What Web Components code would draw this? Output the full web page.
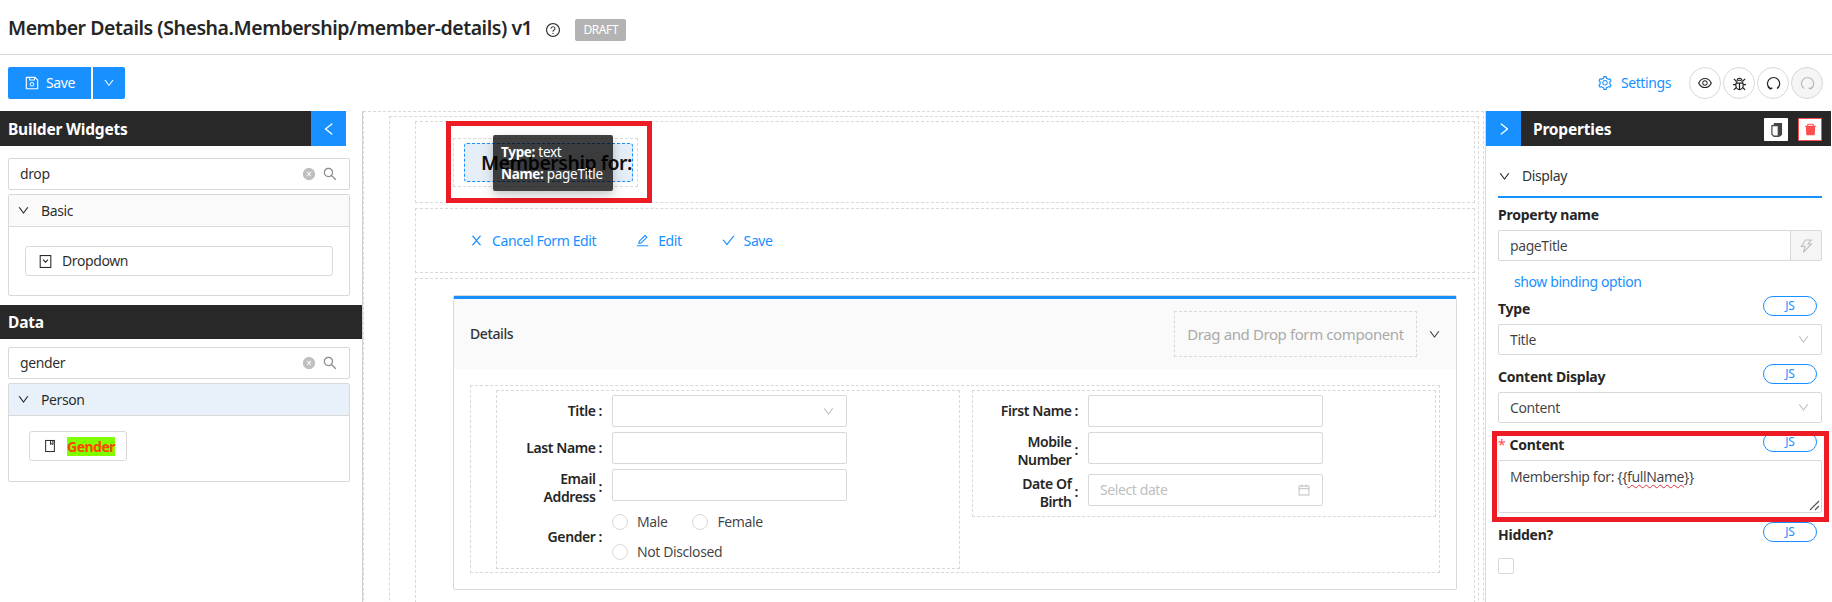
<!DOCTYPE html>
<html>
<head>
<meta charset="utf-8">
<title>Member Details</title>
<style>
  html, body { margin: 0; height: 100%; overflow: hidden; background: #fff; }
  body { font: 14px/22px "Noto Sans", "Open Sans", sans-serif; letter-spacing: -0.4px; color: rgba(0,0,0,.85); }
  form-designer { display: block; }
</style>
</head>
<body>

<form-designer>
  <page-header slot="top"></page-header>
  <tool-bar slot="top"></tool-bar>

  <left-sidebar slot="left">
    <panel-bar tone="left">Builder Widgets</panel-bar>
    <div class="pad12"></div>
    <search-box value="drop"></search-box>
    <collapse-panel title="Basic" pad="19px 16px 19px 16px">
      <drag-item icon="dropdown" wide>Dropdown</drag-item>
    </collapse-panel>
    <panel-bar tone="data">Data</panel-bar>
    <search-box value="gender"></search-box>
    <collapse-panel title="Person" active pad="15px 20px 20px 20px">
      <drag-item icon="book" mark>Gender</drag-item>
    </collapse-panel>
  </left-sidebar>

  <design-canvas slot="center">
    <title-row></title-row>
    <action-row>
      <link-action icon="close">Cancel Form Edit</link-action>
      <link-action icon="edit">Edit</link-action>
      <link-action icon="check">Save</link-action>
    </action-row>
    <section-row>
      <details-card>
        <form-column>
          <form-row><span slot="label">Title</span><text-box icon="down"></text-box></form-row>
          <form-row><span slot="label">Last Name</span><text-box></text-box></form-row>
          <form-row tall><span slot="label">Email<br>Address</span><text-box></text-box></form-row>
          <form-row radio>
            <span slot="label">Gender</span>
            <radio-group>
              <radio-option>Male</radio-option>
              <radio-option>Female</radio-option>
              <radio-option>Not Disclosed</radio-option>
            </radio-group>
          </form-row>
        </form-column>
        <form-column short>
          <form-row><span slot="label">First Name</span><text-box></text-box></form-row>
          <form-row tall><span slot="label">Mobile<br>Number</span><text-box></text-box></form-row>
          <form-row tall><span slot="label">Date Of<br>Birth</span><text-box icon="calendar" placeholder="Select date"></text-box></form-row>
        </form-column>
      </details-card>
    </section-row>
  </design-canvas>

  <right-sidebar slot="right">
    <prop-field label="Property name">
      <text-box value="pageTitle" height="31" bolt></text-box>
    </prop-field>
    <binding-link>show binding option</binding-link>
    <prop-field label="Type" js><text-box value="Title" icon="down" height="31"></text-box></prop-field>
    <prop-field label="Content Display" js><text-box value="Content" icon="down" height="31"></text-box></prop-field>
    <prop-field label="Content" js required marked><content-area></content-area></prop-field>
    <prop-field label="Hidden?" js><check-box></check-box></prop-field>
  </right-sidebar>
</form-designer>

<script>
const BLUE = '#1890ff';
const DASH = '1px dashed #d9d9d9';

const ICONS = {
  down: 'M884 256h-75c-5.1 0-9.9 2.5-12.9 6.6L512 654.2 227.9 262.6c-3-4.1-7.8-6.6-12.9-6.6h-75c-6.5 0-10.3 7.4-6.5 12.7l352.6 486.1c12.8 17.6 39 17.6 51.7 0l352.6-486.1c3.9-5.3.1-12.7-6.4-12.7z',
  left: 'M724 218.3V141c0-6.7-7.7-10.4-12.9-6.3L260.3 486.8a31.86 31.86 0 000 50.3l450.8 352.1c5.3 4.1 12.9.4 12.9-6.3v-77.3c0-4.9-2.3-9.6-6.1-12.6l-360-281 360-281.1c3.8-3 6.1-7.7 6.1-12.6z',
  right: 'M765.7 486.8L314.9 134.7A7.97 7.97 0 00302 141v77.3c0 4.9 2.3 9.6 6.1 12.6l360 281.1-360 281.1c-3.9 3-6.1 7.7-6.1 12.6V883c0 6.7 7.7 10.4 12.9 6.3l450.8-352.1a31.96 31.96 0 000-50.4z',
  search: 'M909.6 854.5L649.9 594.8C690.2 542.7 712 479 712 412c0-80.2-31.3-155.4-87.9-212.1-56.6-56.7-132-87.9-212.1-87.9s-155.5 31.3-212.1 87.9C143.2 256.5 112 331.8 112 412c0 80.1 31.3 155.5 87.9 212.1C256.5 680.8 331.8 712 412 712c67 0 130.6-21.8 182.7-62l259.7 259.6a8.2 8.2 0 0011.6 0l43.6-43.5a8.2 8.2 0 000-11.6zM570.4 570.4C528 612.7 471.8 636 412 636s-116-23.3-158.4-65.6C211.3 528 188 471.8 188 412s23.3-116.1 65.6-158.4C296 211.3 352.2 188 412 188s116.1 23.2 158.4 65.6S636 352.2 636 412s-23.3 116.1-65.6 158.4z',
  close: 'M563.8 512l262.5-312.9c4.4-5.2.7-13.1-6.1-13.1h-79.8c-4.7 0-9.2 2.1-12.3 5.7L511.6 449.8 295.1 191.7c-3-3.6-7.5-5.7-12.3-5.7H203c-6.8 0-10.5 7.9-6.1 13.1L459.4 512 196.9 824.9A7.95 7.95 0 00203 838h79.8c4.7 0 9.2-2.1 12.3-5.7l216.5-258.1 216.5 258.1c3 3.6 7.5 5.7 12.3 5.7h79.8c6.8 0 10.5-7.9 6.1-13.1L563.8 512z',
  check: 'M912 190h-69.9c-9.8 0-19.1 4.5-25.1 12.2L404.7 724.5 207 474a32 32 0 00-25.1-12.2H112c-6.7 0-10.4 7.7-6.3 12.9l273.9 347c12.8 16.2 37.4 16.2 50.3 0l488.4-618.9c4.1-5.1.4-12.8-6.3-12.8z',
  edit: 'M257.7 752c2 0 4-.2 6-.5L431.9 722c2-.4 3.9-1.3 5.3-2.8l423.9-423.9a9.96 9.96 0 000-14.1L694.9 114.9c-1.9-1.9-4.4-2.9-7.1-2.9s-5.2 1-7.1 2.9L256.8 538.8c-1.5 1.5-2.4 3.3-2.8 5.3l-29.5 168.2a33.5 33.5 0 009.4 29.8c6.6 6.4 14.9 9.9 23.8 9.9zm67.4-174.4L687.8 215l73.3 73.3-362.7 362.6-88.9 15.7 15.6-89zM880 836H144c-17.7 0-32 14.3-32 32v36c0 4.4 3.6 8 8 8h784c4.4 0 8-3.6 8-8v-36c0-17.7-14.3-32-32-32z',
  eye: 'M942.2 486.2C847.4 286.5 704.1 186 512 186c-192.2 0-335.4 100.5-430.2 300.3a60.3 60.3 0 000 51.5C176.6 737.5 319.9 838 512 838c192.2 0 335.4-100.5 430.2-300.3 7.7-16.2 7.7-35 0-51.5zM512 766c-161.3 0-279.4-81.8-362.7-254C232.6 339.8 350.7 258 512 258c161.3 0 279.4 81.8 362.7 254C791.5 684.2 673.4 766 512 766zm-4-430c-97.2 0-176 78.8-176 176s78.8 176 176 176 176-78.8 176-176-78.8-176-176-176zm0 288c-61.9 0-112-50.1-112-112s50.1-112 112-112 112 50.1 112 112-50.1 112-112 112z',
  setting: 'M924.8 625.7l-65.5-56c3.1-19 4.7-38.4 4.7-57.8s-1.6-38.8-4.7-57.8l65.5-56a32.03 32.03 0 009.3-35.2l-.9-2.6a443.74 443.74 0 00-79.7-137.9l-1.8-2.1a32.12 32.12 0 00-35.1-9.5l-81.3 28.9c-30-24.6-63.5-44-99.7-57.6l-15.7-85a32.05 32.05 0 00-25.8-25.7l-2.7-.5c-52.1-9.4-106.9-9.4-159 0l-2.7.5a32.05 32.05 0 00-25.8 25.7l-15.8 85.4a351.86 351.86 0 00-99 57.4l-81.9-29.1a32 32 0 00-35.1 9.5l-1.8 2.1a446.02 446.02 0 00-79.7 137.9l-.9 2.6c-4.5 12.5-.8 26.5 9.3 35.2l66.3 56.6c-3.1 18.8-4.6 38-4.6 57.1 0 19.2 1.5 38.4 4.6 57.1L99 625.5a32.03 32.03 0 00-9.3 35.2l.9 2.6c18.1 50.4 44.9 96.9 79.7 137.9l1.8 2.1a32.12 32.12 0 0035.1 9.5l81.9-29.1c29.8 24.5 63.1 43.9 99 57.4l15.8 85.4a32.05 32.05 0 0025.8 25.7l2.7.5a449.4 449.4 0 00159 0l2.7-.5a32.05 32.05 0 0025.8-25.7l15.7-85a350 350 0 0099.7-57.6l81.3 28.9a32 32 0 0035.1-9.5l1.8-2.1c34.8-41.1 61.6-87.5 79.7-137.9l.9-2.6c4.5-12.3.8-26.3-9.3-35zM788.3 465.9c2.5 15.1 3.8 30.6 3.8 46.1s-1.3 31-3.8 46.1l-6.6 40.1 74.7 63.9a370.03 370.03 0 01-42.6 73.6L721 702.8l-31.4 25.8c-23.9 19.6-50.5 35-79.3 45.8l-38.1 14.3-17.9 97a377.5 377.5 0 01-85 0l-17.9-97.2-37.8-14.5c-28.5-10.8-55-26.2-78.7-45.7l-31.4-25.9-93.4 33.2c-17-22.9-31.2-47.6-42.6-73.6l75.5-64.5-6.5-40c-2.4-14.9-3.7-30.3-3.7-45.5 0-15.3 1.2-30.6 3.7-45.5l6.5-40-75.5-64.5c11.3-26.1 25.6-50.7 42.6-73.6l93.4 33.2 31.4-25.9c23.7-19.5 50.2-34.9 78.7-45.7l37.9-14.3 17.9-97.2c28.1-3.2 56.8-3.2 85 0l17.9 97 38.1 14.3c28.7 10.8 55.4 26.2 79.3 45.8l31.4 25.8 92.8-32.9c17 22.9 31.2 47.6 42.6 73.6L781.8 426l6.5 39.9zM512 326c-97.2 0-176 78.8-176 176s78.8 176 176 176 176-78.8 176-176-78.8-176-176-176zm79.2 255.2A111.6 111.6 0 01512 614c-29.9 0-58-11.7-79.2-32.8A111.6 111.6 0 01400 502c0-29.9 11.7-58 32.8-79.2C454 401.6 482.1 390 512 390c29.9 0 58 11.6 79.2 32.8A111.6 111.6 0 01624 502c0 29.9-11.7 58-32.8 79.2z',
  save: 'M893.3 293.3L730.7 130.7c-7.5-7.5-16.7-13-26.7-16V112H144c-17.7 0-32 14.3-32 32v736c0 17.7 14.3 32 32 32h736c17.7 0 32-14.3 32-32V338.5c0-17-6.7-33.2-18.7-45.2zM384 184h256v104H384V184zm456 656H184V184h136v136c0 17.7 14.3 32 32 32h320c17.7 0 32-14.3 32-32V205.8l136 136V840zM512 442c-79.5 0-144 64.5-144 144s64.5 144 144 144 144-64.5 144-144-64.5-144-144-144zm0 224c-44.2 0-80-35.8-80-80s35.8-80 80-80 80 35.8 80 80-35.8 80-80 80z',
  help: 'M512 64C264.6 64 64 264.6 64 512s200.6 448 448 448 448-200.6 448-448S759.4 64 512 64zm0 820c-205.4 0-372-166.6-372-372s166.6-372 372-372 372 166.6 372 372-166.6 372-372 372zM623.6 316.7C593.6 290.4 554 276 512 276s-81.6 14.5-111.6 40.7C369.2 344 352 380.7 352 420v7.6c0 4.4 3.6 8 8 8h48c4.4 0 8-3.6 8-8V420c0-44.1 43.1-80 96-80s96 35.9 96 80c0 31.1-22 59.6-56.1 72.7-21.2 8.1-39.2 22.3-52.1 40.9-13.1 19-19.9 41.8-19.9 64.9V620c0 4.4 3.6 8 8 8h48c4.4 0 8-3.6 8-8v-22.7a48.3 48.3 0 0130.9-44.8c59-22.7 97.1-74.7 97.1-132.5.1-39.3-17.1-76-48.3-103.3zM472 732a40 40 0 1080 0 40 40 0 10-80 0z',
  calendar: 'M880 184H712v-64c0-4.4-3.6-8-8-8h-56c-4.4 0-8 3.6-8 8v64H384v-64c0-4.4-3.6-8-8-8h-56c-4.4 0-8 3.6-8 8v64H144c-17.7 0-32 14.3-32 32v664c0 17.7 14.3 32 32 32h736c17.7 0 32-14.3 32-32V216c0-17.7-14.3-32-32-32zm-40 656H184V460h656v380zM184 392V256h128v48c0 4.4 3.6 8 8 8h56c4.4 0 8-3.6 8-8v-48h256v48c0 4.4 3.6 8 8 8h56c4.4 0 8-3.6 8-8v-48h128v136H184z',
  trash: 'M864 256H736v-80c0-35.3-28.7-64-64-64H352c-35.3 0-64 28.7-64 64v80H160c-17.7 0-32 14.3-32 32v32c0 4.4 3.6 8 8 8h60.4l24.7 523c1.6 34.1 29.8 61 63.9 61h454c34.2 0 62.3-26.8 63.9-61l24.7-523H888c4.4 0 8-3.6 8-8v-32c0-17.7-14.3-32-32-32zm-200 0H360v-72h304v72z',
  clear: 'M512 64C264.6 64 64 264.6 64 512s200.6 448 448 448 448-200.6 448-448S759.4 64 512 64zm165.4 618.2l-66-.3L512 563.4l-99.3 118.4-66.1.3c-4.4 0-8-3.5-8-8 0-1.9.7-3.7 1.9-5.2l130.1-155L340.5 359a8.32 8.32 0 01-1.9-5.2c0-4.4 3.6-8 8-8l66.1.3L512 464.6l99.3-118.4 66-.3c4.4 0 8 3.5 8 8 0 1.9-.7 3.8-1.9 5.2L553.5 514l130 155c1.2 1.5 1.9 3.3 1.9 5.2 0 4.4-3.6 8-8 8z'
};

// icons without a stock outline, drawn with strokes on a 24 box
const DRAWN = {
  bug: '<ellipse cx="12" cy="14" rx="5.2" ry="6.6"/><path d="M7 11.5h10M12 11.5V20.5M8.5 7.5a3.6 3.6 0 017 0M4 5.5l3.6 3.4M20 5.5l-3.6 3.4M2.8 13.5h4M21.2 13.5h-4M4 21l3.6-3.4M20 21l-3.6-3.4"/>',
  undo: '<path d="M7.2 19.2A8.6 8.6 0 1117 19.2"/><path d="M4.6 16.6l2.8 3 3-1.4" stroke-width="2.2"/>',
  redo: '<path d="M7.2 19.2A8.6 8.6 0 1117 19.2"/><path d="M19.4 16.6l-2.8 3-3-1.4" stroke-width="2.2"/>',
  dropdown: '<rect x="3.5" y="2.5" width="17" height="19"/><path d="M8 9l4 4 4-4"/>',
  book: '<rect x="4.5" y="2.5" width="15" height="19"/><path d="M13 2.5v7l2-1.6 2 1.6v-7"/>',
  copy: '<path d="M9 6.5V3.5h10v15.5l-3 2.5H9z" fill="#444"/><path d="M5.5 6.5h9v14.8H8l-2.5-2.6z" fill="#fff"/>',
  bolt: '<path d="M11 3h9l-5 6h5L8 21.5l2.6-9H5z"/>'
};

class UiIcon extends HTMLElement {
  connectedCallback() {
    const name = this.getAttribute('name');
    const size = this.getAttribute('size') || 14;
    const body = DRAWN[name]
      ? `<svg viewBox="0 0 24 24" fill="none" stroke="currentColor" stroke-width="1.7">${DRAWN[name]}</svg>`
      : `<svg viewBox="0 0 1024 1024" fill="currentColor"><path d="${ICONS[name]}"/></svg>`;
    this.attachShadow({ mode: 'open' }).innerHTML = `
      <style>
        :host { display: inline-flex; flex: none; width: ${size}px; height: ${size}px; }
        svg { width: 100%; height: 100%; display: block; }
      </style>${body}`;
  }
}

// Most elements only need a shadow root filled once
function element(tag, render) {
  customElements.define(tag, class extends HTMLElement {
    connectedCallback() {
      if (!this.shadowRoot) this.attachShadow({ mode: 'open' }).innerHTML = render(this);
    }
  });
}

element('form-designer', () => `
  <style>
    :host { display: block; height: 602px; overflow: hidden; }
    .body { display: flex; height: 491px; overflow: hidden; }
  </style>
  <slot name="top"></slot>
  <div class="body">
    <slot name="left"></slot>
    <slot name="center"></slot>
    <slot name="right"></slot>
  </div>`);

element('page-header', () => `
  <style>
    :host { display: flex; align-items: center; height: 54px; box-sizing: content-box; border-bottom: 1px solid #d9d9d9; padding-left: 8px; }
    h1 { margin: 2px 0 0; font-size: 19.5px; line-height: 26px; font-weight: 600; letter-spacing: -.45px; color: #262626; }
    ui-icon { margin: 6px 0 0 13px; color: #333; }
    .tag { margin: 6px 0 0 14px; width: 51px; height: 22px; background: #b3b3b3; color: #fff; font-size: 12px; line-height: 22px; text-align: center; border-radius: 2px; }
  </style>
  <h1>Member Details (Shesha.Membership/member-details) v1</h1>
  <ui-icon name="help" size="16"></ui-icon>
  <span class="tag">DRAFT</span>`);

element('tool-bar', () => `
  <style>
    :host { display: flex; align-items: flex-start; height: 56px; padding: 12px 9px 0 8px; box-sizing: border-box; }
    .btn { display: flex; align-items: center; height: 32px; background: ${BLUE}; color: #fff; border-radius: 2px 0 0 2px; box-sizing: border-box; }
    .save { width: 83px; padding-left: 16px; gap: 6px; }
    .more { width: 32px; margin-left: 2px; justify-content: center; border-radius: 0 2px 2px 0; }
    .settings { margin-left: auto; display: flex; align-items: center; gap: 8px; height: 32px; color: ${BLUE}; margin-right: 18px; }
    .round { display: flex; gap: 2px; }
    .round span { width: 32px; height: 32px; box-sizing: border-box; border: 1px solid #d9d9d9; border-radius: 50%; display: flex; align-items: center; justify-content: center; color: #222; }
    .round span.off { background: #f5f5f5; color: #bbb; }
  </style>
  <div class="btn save"><ui-icon name="save" size="16"></ui-icon>Save</div>
  <div class="btn more"><ui-icon name="down" size="12"></ui-icon></div>
  <div class="settings"><ui-icon name="setting" size="16"></ui-icon>Settings</div>
  <div class="round">
    <span><ui-icon name="eye" size="16"></ui-icon></span>
    <span><ui-icon name="bug" size="17"></ui-icon></span>
    <span><ui-icon name="undo" size="17"></ui-icon></span>
    <span class="off"><ui-icon name="redo" size="17"></ui-icon></span>
  </div>`);

element('left-sidebar', () => `
  <style>
    :host { display: flex; flex-direction: column; width: 362px; flex: none; }
    ::slotted(.pad12) { height: 12px; flex: none; }
  </style>
  <slot></slot>`);

element('panel-bar', el => {
  const isLeft = el.getAttribute('tone') === 'left';
  return `
  <style>
    :host { display: flex; align-items: center; flex: none; background: #282828; color: #fff; font-weight: 700; font-size: 15.5px; letter-spacing: -.2px; box-sizing: border-box; padding-left: 8px;
      height: ${isLeft ? 35 : 34}px; width: ${isLeft ? 346 : 362}px; margin-top: ${isLeft ? 0 : 9}px; margin-bottom: ${isLeft ? 0 : 8}px; }
    .toggle { margin-left: auto; width: 35px; height: 100%; background: ${BLUE}; display: flex; align-items: center; justify-content: center; }
  </style>
  <slot></slot>
  ${isLeft ? '<span class="toggle"><ui-icon name="left" size="16"></ui-icon></span>' : ''}`;
});

element('search-box', el => `
  <style>
    :host { display: flex; align-items: center; flex: none; box-sizing: border-box; width: 342px; height: 32px; margin-left: 8px; padding: 0 11px; border: 1px solid #d9d9d9; border-radius: 2px; }
    span { flex: 1; }
    .x { color: #bfbfbf; margin-right: 6px; }
    .s { color: #8c8c8c; }
  </style>
  <span>${el.getAttribute('value')}</span>
  <ui-icon class="x" name="clear" size="14"></ui-icon>
  <ui-icon class="s" name="search" size="16"></ui-icon>`);

element('collapse-panel', el => `
  <style>
    :host { display: block; flex: none; box-sizing: border-box; width: 342px; margin: 4px 0 0 8px; border: 1px solid #d9d9d9; border-radius: 2px; }
    .head { display: flex; align-items: center; height: 31px; padding-left: 8px; gap: 11px; border-bottom: 1px solid #d9d9d9; background: ${el.hasAttribute('active') ? '#e8f1f9' : '#fafafa'}; }
    .content { padding: ${el.getAttribute('pad')}; }
  </style>
  <div class="head"><ui-icon name="down" size="13"></ui-icon>${el.getAttribute('title')}</div>
  <div class="content"><slot></slot></div>`);

element('drag-item', el => `
  <style>
    :host { display: ${el.hasAttribute('wide') ? 'flex' : 'inline-flex'}; vertical-align: top; align-items: center; box-sizing: border-box; height: 30px; padding-left: ${el.hasAttribute('wide') ? 12 : 13}px; border: 1px solid #d9d9d9; border-radius: 3px; gap: ${el.hasAttribute('wide') ? 9 : 10}px; ${el.hasAttribute('mark') ? 'width: 98px;' : ''} }
    .mark { background: #7fff00; color: #ff4500; font-weight: 700; line-height: 19px; letter-spacing: -.5px; }
  </style>
  <ui-icon name="${el.getAttribute('icon')}" size="${el.hasAttribute('wide') ? 15 : 14}"></ui-icon>
  ${el.hasAttribute('mark') ? '<span class="mark"><slot></slot></span>' : '<slot></slot>'}`);

// nested dashed frames of the canvas
element('design-canvas', () => `
  <style>
    :host { display: block; flex: none; width: 1124px; overflow: hidden; border-left: 1px solid #d0d0d0; box-sizing: border-box; padding-right: 2px; }
    .outer { border: ${DASH}; border-bottom: 0; padding: 4px 4px 0 25px; height: 600px; box-sizing: border-box; }
    .inner { border: ${DASH}; border-bottom: 0; padding: 4px 3px 0 25px; height: 600px; box-sizing: border-box; }
  </style>
  <div class="outer"><div class="inner"><slot></slot></div></div>`);

element('title-row', () => `
  <style>
    :host { display: flex; box-sizing: border-box; height: 82px; border: ${DASH}; padding-left: 30px; }
    .red { position: relative; box-sizing: border-box; width: 206px; height: 82px; margin-top: -1px; border: 5px solid #ed1c24; padding: 12px 9px 0 2px; }
    .frame { box-sizing: border-box; height: 49px; border: ${DASH}; padding: 4px 4px 4px 10px; }
    .title { box-sizing: border-box; height: 39px; border: 1px dashed ${BLUE}; border-radius: 3px; background: #e6eff8; padding-left: 16px; font-size: 19.5px; font-weight: 600; line-height: 37px; letter-spacing: -.5px; color: #111; white-space: nowrap; overflow: hidden; }
    .tip { position: absolute; left: 42px; top: 9px; width: 120px; height: 56px; box-sizing: border-box; padding: 6px 8px; background: rgba(0,0,0,.75); color: #fff; border-radius: 2px; box-shadow: 0 6px 16px rgba(0,0,0,.14), 0 3px 6px rgba(0,0,0,.1); line-height: 22px; font-size: 13.5px; letter-spacing: -.3px; }
    .tip b { font-weight: 700; }
  </style>
  <div class="red">
    <div class="frame"><div class="title">Membership for:</div></div>
    <div class="tip"><div><b>Type:</b> text</div><div><b>Name:</b> pageTitle</div></div>
  </div>`);

element('action-row', () => `
  <style>
    :host { display: flex; align-items: center; gap: 39px; box-sizing: border-box; height: 65px; margin-top: 5px; border: ${DASH}; padding-left: 53px; }
  </style>
  <slot></slot>`);

element('link-action', el => `
  <style>
    :host { display: inline-flex; align-items: center; gap: 8px; color: ${BLUE}; }
  </style>
  <ui-icon name="${el.getAttribute('icon')}" size="15"></ui-icon><slot></slot>`);

element('section-row', () => `
  <style>
    :host { display: block; box-sizing: border-box; height: 330px; margin-top: 5px; border: ${DASH}; padding: 16px 17px 0 37px; }
  </style>
  <slot></slot>`);

element('details-card', () => `
  <style>
    :host { display: block; box-sizing: border-box; height: 295px; border: 1px solid #d9d9d9; border-radius: 2px; }
    .bar { height: 3px; background: ${BLUE}; }
    .head { display: flex; align-items: center; height: 70px; background: #fafafa; padding: 0 15px 0 16px; }
    .head b { font-weight: 500; color: #333; }
    .drop { margin-left: auto; width: 243px; height: 46px; box-sizing: border-box; border: ${DASH}; display: flex; align-items: center; justify-content: center; color: #aaa; font-size: 15px; }
    .head ui-icon { margin-left: 11px; color: #444; }
    .body { padding: 16px; }
    .grid { display: flex; align-items: flex-start; gap: 12px; border: ${DASH}; height: 188px; box-sizing: border-box; padding: 4px 3px 0 25px; }
  </style>
  <div class="bar"></div>
  <div class="head"><b>Details</b><span class="drop">Drag and Drop form component</span><ui-icon name="down" size="13"></ui-icon></div>
  <div class="body"><div class="grid"><slot></slot></div></div>`);

element('form-column', el => `
  <style>
    :host { display: block; box-sizing: border-box; width: 464px; border: ${DASH}; padding-top: 4px; height: ${el.hasAttribute('short') ? 127 : 179}px; }
  </style>
  <slot></slot>`);

element('form-row', el => {
  const tall = el.hasAttribute('tall');
  const radio = el.hasAttribute('radio');
  return `
  <style>
    :host { display: flex; align-items: flex-start; margin-bottom: 5px; height: ${radio ? 52 : tall ? 37 : 32}px; }
    .label { display: flex; align-items: center; justify-content: flex-end; box-sizing: border-box; width: 115px; height: 100%; padding-right: 10px; text-align: right; font-weight: 600; line-height: 18px; color: #262626; }
    .label i { font-style: normal; margin-left: 3px; ${tall ? 'margin-bottom: 2px;' : ''} }
    .control { flex: none; width: 235px; }
  </style>
  <div class="label"><span><slot name="label"></slot></span><i>:</i></div>
  <div class="control"><slot></slot></div>`;
});

element('text-box', el => {
  const h = el.getAttribute('height') || 32;
  const value = el.getAttribute('value') || '';
  const hint = el.getAttribute('placeholder');
  const icon = el.getAttribute('icon');
  return `
  <style>
    :host { display: flex; height: ${h}px; }
    .box { flex: 1; display: flex; align-items: center; box-sizing: border-box; height: 100%; padding: 0 11px; border: 1px solid #d9d9d9; border-radius: 2px; background: #fff; }
    .value { flex: 1; color: ${hint ? '#bfbfbf' : 'rgba(0,0,0,.75)'}; }
    ui-icon { color: #bfbfbf; }
    .addon { width: 32px; box-sizing: border-box; margin-left: -1px; border: 1px solid #d9d9d9; border-radius: 0 2px 2px 0; background: #f5f5f5; display: flex; align-items: center; justify-content: center; }
  </style>
  <div class="box"><span class="value">${hint || value}</span>${icon ? `<ui-icon name="${icon}" size="${icon === 'down' ? 13 : 14}"></ui-icon>` : ''}</div>
  ${el.hasAttribute('bolt') ? '<div class="addon"><ui-icon name="bolt" size="16"></ui-icon></div>' : ''}`;
});

element('radio-group', () => `
  <style>
    :host { display: flex; flex-wrap: wrap; column-gap: 25px; row-gap: 8px; width: 200px; }
  </style>
  <slot></slot>`);

element('radio-option', () => `
  <style>
    :host { display: inline-flex; align-items: center; height: 22px; gap: 9px; color: rgba(0,0,0,.75); }
    i { width: 16px; height: 16px; box-sizing: border-box; border: 1px solid #d9d9d9; border-radius: 50%; }
  </style>
  <i></i><slot></slot>`);

element('right-sidebar', () => `
  <style>
    :host { display: block; flex: none; width: 346px; box-sizing: border-box; border-left: 1px solid #d9d9d9; margin-left: -1px; }
    .bar { display: flex; align-items: center; height: 35px; background: #282828; color: #fff; font-weight: 700; font-size: 15.5px; letter-spacing: -.2px; }
    .toggle { width: 35px; height: 100%; background: ${BLUE}; display: flex; align-items: center; justify-content: center; }
    .name { margin-left: 12px; flex: 1; }
    .tool { width: 24px; height: 23px; margin-top: 1px; background: #fff; display: flex; align-items: center; justify-content: center; box-sizing: border-box; color: #444; border-radius: 1px; }
    .copy { margin-right: 10px; }
    .del { margin-right: 9px; color: #ff4d4f; border: 1px solid #ff4d4f; }
    .content { padding: 0 9px 0 12px; }
    .group { display: flex; align-items: center; box-sizing: border-box; height: 52px; padding-top: 10px; gap: 11px; border-bottom: 2px solid ${BLUE}; }
    .group span { color: #333; }
  </style>
  <div class="bar">
    <span class="toggle"><ui-icon name="right" size="16"></ui-icon></span>
    <span class="name">Properties</span>
    <span class="tool copy"><ui-icon name="copy" size="17"></ui-icon></span>
    <span class="tool del"><ui-icon name="trash" size="15"></ui-icon></span>
  </div>
  <div class="content">
    <div class="group"><ui-icon name="down" size="13"></ui-icon><span>Display</span></div>
    <slot></slot>
  </div>`);

element('prop-field', el => `
  <style>
    :host { display: block; position: relative; margin-bottom: 7px; padding-top: 0; }
    :host(:first-of-type) { margin-top: 2px; margin-bottom: 10px; }
    .head { display: flex; align-items: flex-start; height: 30px; font-weight: 700; line-height: 30px; color: #262626; letter-spacing: -.25px; }
    .req { color: #ff4d4f; margin-right: 4px; font-weight: 400; }
    .js { margin: 2px 5px 0 auto; width: 54px; height: 20px; box-sizing: border-box; border: 1px solid ${BLUE}; border-radius: 10px; color: ${BLUE}; font-size: 12px; font-weight: 400; line-height: 18px; text-align: center; }
    .mark { position: absolute; left: -6px; right: -7px; top: 1px; bottom: -9px; border: 5px solid #ed1c24; pointer-events: none; }
  </style>
  <div class="head">${el.hasAttribute('required') ? '<span class="req">*</span>' : ''}${el.getAttribute('label')}${el.hasAttribute('js') ? '<span class="js">JS</span>' : ''}</div>
  <slot></slot>
  ${el.hasAttribute('marked') ? '<div class="mark"></div>' : ''}`);

element('binding-link', () => `
  <style>
    :host { display: block; height: 22px; margin: 0 0 1px 16px; color: ${BLUE}; }
  </style>
  <slot></slot>`);

element('content-area', () => `
  <style>
    :host { display: block; position: relative; box-sizing: border-box; height: 53px; padding: 5px 11px; border: 1px solid #d9d9d9; border-radius: 2px; color: rgba(0,0,0,.75); }
    u { text-decoration: underline wavy #e5303a 1px; text-underline-offset: 2px; }
    svg { position: absolute; right: 1px; bottom: 1px; width: 11px; height: 11px; }
  </style>
  Membership for: {{<u>fullName</u>}}
  <svg viewBox="0 0 11 11" stroke="#555" stroke-width="1.2"><path d="M1 10L10 1M6 10l4-4"/></svg>`);

element('check-box', () => `
  <style>
    :host { display: block; width: 16px; height: 16px; box-sizing: border-box; margin-top: 8px; border: 1px solid #d9d9d9; border-radius: 2px; }
  </style>`);

customElements.define('ui-icon', UiIcon);
</script>
</body>
</html>
